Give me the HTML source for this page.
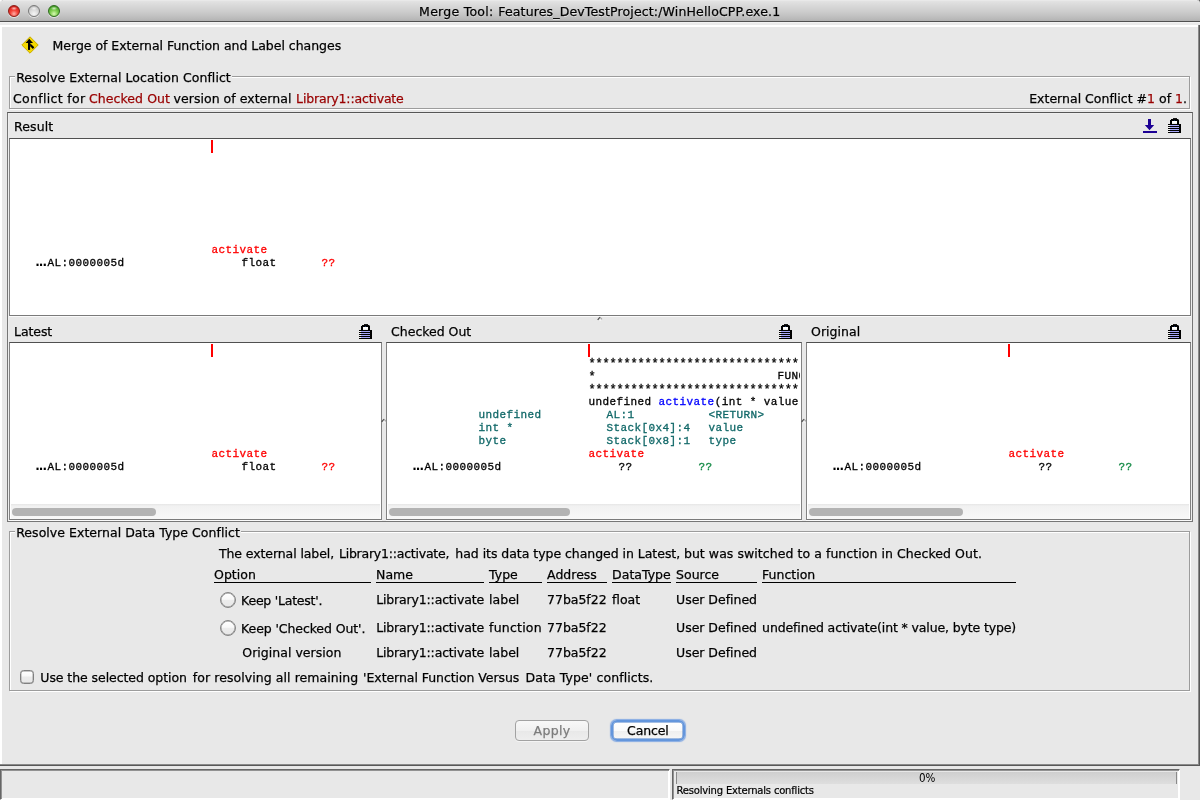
<!DOCTYPE html>
<html lang="en">
<head>
<meta charset="utf-8">
<title>Merge Tool</title>
<style>
html,body{margin:0;padding:0;}
body{width:1200px;height:800px;overflow:hidden;background:#e8e8e8;position:relative;font-family:"DejaVu Sans", "Liberation Sans", sans-serif;font-size:12.5px;color:#000;}
.abs{position:absolute;}
#titlebar,#main,#status{will-change:transform;}
#titlebar{position:absolute;left:0;top:0;width:1200px;height:21px;border-bottom:1px solid #505050;background:linear-gradient(#efefef 0,#e3e3e3 1px,#dadada 5px,#cccccc 12px,#bcbcbc 18px,#b2b2b2 21px);border-radius:3px 3px 0 0;z-index:2;}
.tl{position:absolute;top:5px;width:10px;height:10px;border-radius:50%;border:1px solid #777;box-shadow:0 1px 0 rgba(255,255,255,.55);}
#main{position:absolute;left:0;top:0;width:1200px;height:766px;background:linear-gradient(#000 0,#000 10px,#e8e8e8 10px);box-shadow:inset -1px -1px 0 #585858, inset -2px -2px 0 #8a8a8a, inset 2px 0 0 #fff;}
#topband{position:absolute;left:0;top:22px;width:1200px;height:3px;background:linear-gradient(#f2f2f2 0,#f2f2f2 1px,#ebebeb 1px,#ebebeb 3px);}
#topband2{position:absolute;left:0;top:25px;width:1198px;height:2px;background:#fff;}
.t,.s,.m,.dots,.tp{position:absolute;white-space:pre;}
.tp{font:12.5px/16px "DejaVu Sans", "Liberation Sans", sans-serif;height:16px;transform:scaleX(0.83);transform-origin:0 0;}
.t{font:12.5px/16px "DejaVu Sans", "Liberation Sans", sans-serif;height:16px;-webkit-text-stroke:0.25px;}
.s{font:10px/12px "DejaVu Sans", "Liberation Sans", sans-serif;height:12px;-webkit-text-stroke:0.2px;}
.r{color:#990000;}
.gbox{position:absolute;border:1px solid #9c9c9c;box-shadow:1px 1px 0 #fff, inset 1px 1px 0 #fff;box-sizing:border-box;}
.gtitle{position:absolute;background:#e8e8e8;}
.outer{position:absolute;border:1px solid #767676;border-top-color:#565656;box-shadow:inset 1px 1px 0 #eeeeee, inset -1px -1px 0 #eeeeee;}
.lbox{position:absolute;background:#fff;border:1px solid #828282;border-top-color:#505050;border-bottom-color:#7a7a7a;overflow:hidden;box-shadow:0 1px 0 #fafafa;}
.m{font:11px/13px "Liberation Mono", "DejaVu Sans Mono", monospace;letter-spacing:0.4px;height:13px;-webkit-text-stroke:0.3px;}
.dots{font:bold 12px/13px "DejaVu Sans", "Liberation Sans", sans-serif;height:13px;letter-spacing:-0.95px;}
.ast{margin-top:1px;font-size:12px;letter-spacing:-0.2px;}
.k{color:#000}.red{color:#ff0000}.blu{color:#0000ff}.teal{color:#106868}.grn{color:#118844}
.lclip{position:absolute;left:0;top:0;right:1px;bottom:0;overflow:hidden;}
.cursor{position:absolute;left:201px;top:1px;width:2px;height:13px;background:#ff0000;}
.sbtrack{position:absolute;left:1px;right:1px;bottom:0;height:15px;background:linear-gradient(#e6e6e6 0,#f1f1f1 2px,#f8f8f8 100%);}
.sbthumb{position:absolute;bottom:3px;height:8px;border-radius:4px;background:#b3b3b3;}
.ul{position:absolute;height:1px;background:#000;}
.radio{position:absolute;width:14px;height:14px;border-radius:50%;border:1px solid #858585;background:linear-gradient(#ffffff 0,#f8f8f8 45%,#ececec 52%,#e7e7e7 100%);box-shadow:inset 0 0 0 0.5px #8e8e8e;}
.cbox{position:absolute;width:12px;height:12px;border-radius:3.5px;border:1px solid #808080;background:linear-gradient(#ffffff 0,#f8f8f8 42%,#ebebeb 50%,#e8e8e8 100%);box-shadow:inset 0 0 0 0.4px #909090;}
.btn{position:absolute;box-sizing:content-box;margin:0;padding:0;font:inherit;color:inherit;text-align:left;overflow:visible;appearance:none;-webkit-appearance:none;border:1px solid #a2a2a2;border-radius:4px;background:linear-gradient(#f8f8f8,#f0f0f0 50%,#e8e8e8 52%,#eeeeee);box-shadow:0 1px 0 rgba(255,255,255,.5);}
.btn.dflt{border:2px solid #6496dc;border-radius:6px;box-shadow:inset 0 0 0 0.5px #4a7fca, 0 0 1px 0.5px rgba(100,150,225,.75);background:linear-gradient(#ffffff,#fafafa 50%,#efefef 52%,#f6f6f6);}
#status{position:absolute;left:0;top:766px;width:1200px;height:34px;background:#e8e8e8;}
.sunk{position:absolute;border-style:solid;border-width:1px;border-color:#666 #fff #fff #666;box-shadow:inset 1px 1px 0 #929292, inset -1px -1px 0 #fff;}
.prog{position:absolute;border-left:1px solid #8a8a8a;border-right:1px solid #8a8a8a;background:linear-gradient(#cfcfcf,#dedede);}
</style>
</head>
<body>
<div id="titlebar">
<div class="tl" style="left:8px;background:radial-gradient(ellipse 3.2px 1.8px at 50% 24%, rgba(255,255,255,.7), rgba(255,255,255,0)),radial-gradient(circle at 50% 78%, #ffb0a8 0, #f4463c 38%, #e22a22 66%, #a01410 100%);border-color:#8e1c16"></div>
<div class="tl" style="left:28px;background:radial-gradient(ellipse 3.2px 1.8px at 50% 24%, rgba(255,255,255,.7), rgba(255,255,255,0)),radial-gradient(circle at 50% 78%, #f6f6f6 0, #dcdcdc 42%, #c6c6c6 72%, #9c9c9c 100%);border-color:#7a7a7a"></div>
<div class="tl" style="left:48px;background:radial-gradient(ellipse 3.2px 1.8px at 50% 24%, rgba(255,255,255,.7), rgba(255,255,255,0)),radial-gradient(circle at 50% 78%, #d8fab4 0, #84d054 38%, #5ab434 66%, #2c7a1a 100%);border-color:#2e6c1e"></div>
<span class="t" style="left:419.1px;top:4px;letter-spacing:0.262px;text-shadow:0 1px 0 rgba(255,255,255,.6)">Merge Tool:</span>
<span class="t" style="left:498.3px;top:4px;letter-spacing:0.151px;text-shadow:0 1px 0 rgba(255,255,255,.6)">Features_DevTestProject:/WinHelloCPP.exe.1</span>
</div>
<div id="main">
<div id="topband"></div><div id="topband2"></div>
<svg class="abs" style="left:21px;top:36px" width="18" height="18" viewBox="0 0 18 18"><path d="M9 0.8 L17.2 9 L9 17.2 L0.8 9 Z" fill="#f4d800" stroke="#c8ac00" stroke-width="1"/><path d="M8.2 2.8 L4.6 6.9 L12 6.9 Z" fill="#000"/><rect x="7" y="6.5" width="2.1" height="7.4" fill="#000"/><path d="M9.1 7.3 L13.3 11.3 L11.9 13 L9.1 10.3 Z" fill="#000"/></svg>
<span class="t" style="left:52.6px;top:38px;letter-spacing:-0.026px;">Merge of External Function and Label changes</span>
<div class="gbox" style="left:9px;top:76px;width:1181px;height:33px"></div>
<div class="gtitle" style="left:15px;top:68px;width:217px;height:16px"></div>
<span class="t" style="left:16.2px;top:70px;letter-spacing:0.060px;">Resolve External Location Conflict</span>
<span class="t" style="left:12.9px;top:91px;letter-spacing:0.337px;">Conflict for</span>
<span class="t" style="left:88.9px;top:91px;letter-spacing:0.082px;color:#990000">Checked Out</span>
<span class="t" style="left:173.6px;top:91px;letter-spacing:0.032px;">version of external</span>
<span class="t" style="left:296.1px;top:91px;letter-spacing:-0.173px;color:#990000">Library1::activate</span>
<span class="t" style="left:1029.2px;top:91px;letter-spacing:0.008px;">External Conflict #<span class="r">1</span> of <span class="r">1</span>.</span>
<div class="outer" style="left:7px;top:112px;width:1184px;height:408px"></div>
<span class="t" style="left:14.1px;top:119px;letter-spacing:0.095px;">Result</span>
<span class="t" style="left:14.1px;top:324px;letter-spacing:-0.108px;">Latest</span>
<span class="t" style="left:391.1px;top:324px;letter-spacing:-0.018px;">Checked Out</span>
<span class="t" style="left:811.1px;top:324px;letter-spacing:0.025px;">Original</span>
<svg class="abs" style="left:1168px;top:118px" width="13" height="15" viewBox="0 0 13 15" shape-rendering="crispEdges"><rect x="5" y="0" width="4" height="1" fill="#1a1a1a"/><rect x="3" y="1" width="7" height="1" fill="#000"/><rect x="10" y="1" width="1" height="1" fill="#777"/><rect x="2" y="2" width="9" height="1" fill="#000"/><rect x="2" y="3" width="2" height="3" fill="#000"/><rect x="9" y="3" width="2" height="3" fill="#000"/><rect x="4" y="3" width="5" height="2" fill="#fff"/><rect x="4" y="5" width="5" height="1" fill="#ececec"/><rect x="6" y="2" width="1" height="1" fill="#0a2a66"/><rect x="0" y="6" width="13" height="9" fill="#000"/><rect x="2" y="7" width="9" height="1" fill="#a6a6fa"/><rect x="2" y="9" width="9" height="1" fill="#a6a6fa"/><rect x="2" y="11" width="9" height="1" fill="#a6a6fa"/><rect x="2" y="13" width="9" height="1" fill="#a6a6fa"/><rect x="0" y="7" width="2" height="1" fill="#f6f6f6"/><rect x="0" y="9" width="2" height="1" fill="#f6f6f6"/><rect x="0" y="11" width="2" height="1" fill="#f6f6f6"/><rect x="0" y="13" width="2" height="1" fill="#f6f6f6"/></svg>
<svg class="abs" style="left:359px;top:324px" width="13" height="15" viewBox="0 0 13 15" shape-rendering="crispEdges"><rect x="5" y="0" width="4" height="1" fill="#1a1a1a"/><rect x="3" y="1" width="7" height="1" fill="#000"/><rect x="10" y="1" width="1" height="1" fill="#777"/><rect x="2" y="2" width="9" height="1" fill="#000"/><rect x="2" y="3" width="2" height="3" fill="#000"/><rect x="9" y="3" width="2" height="3" fill="#000"/><rect x="4" y="3" width="5" height="2" fill="#fff"/><rect x="4" y="5" width="5" height="1" fill="#ececec"/><rect x="6" y="2" width="1" height="1" fill="#0a2a66"/><rect x="0" y="6" width="13" height="9" fill="#000"/><rect x="2" y="7" width="9" height="1" fill="#a6a6fa"/><rect x="2" y="9" width="9" height="1" fill="#a6a6fa"/><rect x="2" y="11" width="9" height="1" fill="#a6a6fa"/><rect x="2" y="13" width="9" height="1" fill="#a6a6fa"/><rect x="0" y="7" width="2" height="1" fill="#f6f6f6"/><rect x="0" y="9" width="2" height="1" fill="#f6f6f6"/><rect x="0" y="11" width="2" height="1" fill="#f6f6f6"/><rect x="0" y="13" width="2" height="1" fill="#f6f6f6"/></svg>
<svg class="abs" style="left:779px;top:324px" width="13" height="15" viewBox="0 0 13 15" shape-rendering="crispEdges"><rect x="5" y="0" width="4" height="1" fill="#1a1a1a"/><rect x="3" y="1" width="7" height="1" fill="#000"/><rect x="10" y="1" width="1" height="1" fill="#777"/><rect x="2" y="2" width="9" height="1" fill="#000"/><rect x="2" y="3" width="2" height="3" fill="#000"/><rect x="9" y="3" width="2" height="3" fill="#000"/><rect x="4" y="3" width="5" height="2" fill="#fff"/><rect x="4" y="5" width="5" height="1" fill="#ececec"/><rect x="6" y="2" width="1" height="1" fill="#0a2a66"/><rect x="0" y="6" width="13" height="9" fill="#000"/><rect x="2" y="7" width="9" height="1" fill="#a6a6fa"/><rect x="2" y="9" width="9" height="1" fill="#a6a6fa"/><rect x="2" y="11" width="9" height="1" fill="#a6a6fa"/><rect x="2" y="13" width="9" height="1" fill="#a6a6fa"/><rect x="0" y="7" width="2" height="1" fill="#f6f6f6"/><rect x="0" y="9" width="2" height="1" fill="#f6f6f6"/><rect x="0" y="11" width="2" height="1" fill="#f6f6f6"/><rect x="0" y="13" width="2" height="1" fill="#f6f6f6"/></svg>
<svg class="abs" style="left:1168px;top:324px" width="13" height="15" viewBox="0 0 13 15" shape-rendering="crispEdges"><rect x="5" y="0" width="4" height="1" fill="#1a1a1a"/><rect x="3" y="1" width="7" height="1" fill="#000"/><rect x="10" y="1" width="1" height="1" fill="#777"/><rect x="2" y="2" width="9" height="1" fill="#000"/><rect x="2" y="3" width="2" height="3" fill="#000"/><rect x="9" y="3" width="2" height="3" fill="#000"/><rect x="4" y="3" width="5" height="2" fill="#fff"/><rect x="4" y="5" width="5" height="1" fill="#ececec"/><rect x="6" y="2" width="1" height="1" fill="#0a2a66"/><rect x="0" y="6" width="13" height="9" fill="#000"/><rect x="2" y="7" width="9" height="1" fill="#a6a6fa"/><rect x="2" y="9" width="9" height="1" fill="#a6a6fa"/><rect x="2" y="11" width="9" height="1" fill="#a6a6fa"/><rect x="2" y="13" width="9" height="1" fill="#a6a6fa"/><rect x="0" y="7" width="2" height="1" fill="#f6f6f6"/><rect x="0" y="9" width="2" height="1" fill="#f6f6f6"/><rect x="0" y="11" width="2" height="1" fill="#f6f6f6"/><rect x="0" y="13" width="2" height="1" fill="#f6f6f6"/></svg>
<svg class="abs" style="left:1143px;top:119px" width="14" height="14" viewBox="0 0 14 14"><path d="M5 0 H8 V6 H11.2 L6.5 11.2 L1.8 6 H5 Z" fill="#1c0094"/><rect x="0" y="12" width="14" height="2" fill="#1c0094"/></svg>
<div class="lbox" style="left:9px;top:138px;width:1180px;height:176px">
<div class="lclip"><div class="cursor"></div>
<span class="m red" style="left:201.6px;top:105px">activate</span>
<span class="dots" style="left:25.2px;top:117px">...</span>
<span class="m k" style="left:37.6px;top:118px">AL:0000005d</span>
<span class="m k" style="left:231.6px;top:118px">float</span>
<span class="m red" style="left:311.6px;top:118px">??</span>
</div>
</div>
<div class="lbox" style="left:9px;top:342px;width:371px;height:176px">
<div class="lclip"><div class="cursor"></div>
<span class="m red" style="left:201.6px;top:105px">activate</span>
<span class="dots" style="left:25.2px;top:117px">...</span>
<span class="m k" style="left:37.6px;top:118px">AL:0000005d</span>
<span class="m k" style="left:231.6px;top:118px">float</span>
<span class="m red" style="left:311.6px;top:118px">??</span>
</div>
<div class="sbtrack"></div><div class="sbthumb" style="left:2px;width:144px"></div>
</div>
<div class="lbox" style="left:386px;top:342px;width:414px;height:176px">
<div class="lclip"><div class="cursor"></div>
<span class="m k ast" style="left:201.6px;top:14px">************************************************************</span>
<span class="m k ast" style="left:201.6px;top:27px">*</span>
<span class="m k" style="left:390.6px;top:27px">FUNCTION                         </span>
<span class="m k ast" style="left:614.6px;top:27px">*</span>
<span class="m k ast" style="left:201.6px;top:40px">************************************************************</span>
<span class="m k" style="left:201.6px;top:53px">undefined <span class="blu">activate</span>(int * value, byte type)</span>
<span class="m teal" style="left:91.6px;top:66px">undefined</span>
<span class="m teal" style="left:219.6px;top:66px">AL:1</span>
<span class="m teal" style="left:321.6px;top:66px">&lt;RETURN&gt;</span>
<span class="m teal" style="left:91.6px;top:79px">int *</span>
<span class="m teal" style="left:219.6px;top:79px">Stack[0x4]:4</span>
<span class="m teal" style="left:321.6px;top:79px">value</span>
<span class="m teal" style="left:91.6px;top:92px">byte</span>
<span class="m teal" style="left:219.6px;top:92px">Stack[0x8]:1</span>
<span class="m teal" style="left:321.6px;top:92px">type</span>
<span class="m red" style="left:201.6px;top:105px">activate</span>
<span class="dots" style="left:25.2px;top:117px">...</span>
<span class="m k" style="left:37.6px;top:118px">AL:0000005d</span>
<span class="m k" style="left:231.6px;top:118px">??</span>
<span class="m grn" style="left:311.6px;top:118px">??</span>
</div>
<div class="sbtrack"></div><div class="sbthumb" style="left:2px;width:181px"></div>
</div>
<div class="lbox" style="left:806px;top:342px;width:383px;height:176px">
<div class="lclip"><div class="cursor"></div>
<span class="m red" style="left:201.6px;top:105px">activate</span>
<span class="dots" style="left:25.2px;top:117px">...</span>
<span class="m k" style="left:37.6px;top:118px">AL:0000005d</span>
<span class="m k" style="left:231.6px;top:118px">??</span>
<span class="m grn" style="left:311.6px;top:118px">??</span>
</div>
<div class="sbtrack"></div><div class="sbthumb" style="left:2px;width:154px"></div>
</div>
<svg class="abs" style="left:596.7px;top:316.3px" width="6" height="5" viewBox="0 0 6 5"><path d="M0.7 3.8 L3 1.2" stroke="#4a4a4a" stroke-width="1.2" fill="none"/><path d="M3 1.2 L5 3.4" stroke="#a4a4a4" stroke-width="1.1" fill="none"/><path d="M2.4 4.2 L4.2 4.2" stroke="#fafafa" stroke-width="1" fill="none"/></svg>
<svg class="abs" style="left:381.3px;top:418px" width="6" height="5" viewBox="0 0 6 5"><path d="M0.7 3.8 L3 1.2" stroke="#4a4a4a" stroke-width="1.2" fill="none"/><path d="M3 1.2 L5 3.4" stroke="#a4a4a4" stroke-width="1.1" fill="none"/><path d="M2.4 4.2 L4.2 4.2" stroke="#fafafa" stroke-width="1" fill="none"/></svg>
<svg class="abs" style="left:801.3px;top:418px" width="6" height="5" viewBox="0 0 6 5"><path d="M0.7 3.8 L3 1.2" stroke="#4a4a4a" stroke-width="1.2" fill="none"/><path d="M3 1.2 L5 3.4" stroke="#a4a4a4" stroke-width="1.1" fill="none"/><path d="M2.4 4.2 L4.2 4.2" stroke="#fafafa" stroke-width="1" fill="none"/></svg>
<div class="gbox" style="left:9px;top:531px;width:1181px;height:160px"></div>
<div class="gtitle" style="left:15px;top:523px;width:226px;height:16px"></div>
<span class="t" style="left:16.2px;top:525px;letter-spacing:0.039px;">Resolve External Data Type Conflict</span>
<span class="t" style="left:218.9px;top:546px;letter-spacing:-0.086px;">The external label,</span>
<span class="t" style="left:338.9px;top:546px;letter-spacing:-0.224px;">Library1::activate,</span>
<span class="t" style="left:455.3px;top:546px;letter-spacing:-0.039px;">had its data type changed in Latest,</span>
<span class="t" style="left:683.9px;top:546px;letter-spacing:0.058px;">but was switched to a function in Checked Out.</span>
<span class="t" style="left:214.1px;top:567px;">Option</span>
<div class="ul" style="left:214px;top:582px;width:157px"></div>
<span class="t" style="left:376.1px;top:567px;">Name</span>
<div class="ul" style="left:376px;top:582px;width:108px"></div>
<span class="t" style="left:489.1px;top:567px;">Type</span>
<div class="ul" style="left:489px;top:582px;width:53px"></div>
<span class="t" style="left:547.1px;top:567px;">Address</span>
<div class="ul" style="left:547px;top:582px;width:60px"></div>
<span class="t" style="left:612.1px;top:567px;">DataType</span>
<div class="ul" style="left:612px;top:582px;width:59px"></div>
<span class="t" style="left:676.1px;top:567px;">Source</span>
<div class="ul" style="left:676px;top:582px;width:81px"></div>
<span class="t" style="left:762.1px;top:567px;">Function</span>
<div class="ul" style="left:762px;top:582px;width:254px"></div>
<div class="radio" role="radio" aria-checked="false" style="left:220px;top:592px"></div>
<div class="radio" role="radio" aria-checked="false" style="left:220px;top:620px"></div>
<span class="t" style="left:241.1px;top:593px;letter-spacing:-0.234px;">Keep 'Latest'.</span>
<span class="t" style="left:241.1px;top:621px;letter-spacing:-0.094px;">Keep 'Checked Out'.</span>
<span class="t" style="left:242.3px;top:645px;letter-spacing:0.029px;">Original version</span>
<span class="t" style="left:376.2px;top:592px;letter-spacing:-0.161px;">Library1::activate</span>
<span class="t" style="left:489.1px;top:592px;">label</span>
<span class="t" style="left:547.1px;top:592px;letter-spacing:-0.038px;">77ba5f22</span>
<span class="t" style="left:612.1px;top:592px;">float</span>
<span class="t" style="left:676px;top:592px;letter-spacing:-0.018px;">User Defined</span>
<span class="t" style="left:376.2px;top:620px;letter-spacing:-0.161px;">Library1::activate</span>
<span class="t" style="left:489.1px;top:620px;letter-spacing:0.205px;">function</span>
<span class="t" style="left:547.1px;top:620px;letter-spacing:-0.038px;">77ba5f22</span>
<span class="t" style="left:676px;top:620px;letter-spacing:-0.018px;">User Defined</span>
<span class="t" style="left:762.1px;top:620px;letter-spacing:-0.134px;">undefined activate(int * value, byte type)</span>
<span class="t" style="left:376.2px;top:645px;letter-spacing:-0.161px;">Library1::activate</span>
<span class="t" style="left:489.1px;top:645px;">label</span>
<span class="t" style="left:547.1px;top:645px;letter-spacing:-0.038px;">77ba5f22</span>
<span class="t" style="left:676px;top:645px;letter-spacing:-0.018px;">User Defined</span>
<div class="cbox" role="checkbox" aria-checked="false" style="left:20px;top:670px"></div>
<span class="t" style="left:40.3px;top:670px;letter-spacing:-0.063px;">Use the selected option</span>
<span class="t" style="left:192.8px;top:670px;letter-spacing:0.067px;">for resolving all remaining</span>
<span class="t" style="left:363.1px;top:670px;letter-spacing:-0.062px;">'External Function Versus</span>
<span class="t" style="left:525.5px;top:670px;letter-spacing:0.090px;">Data Type' conflicts.</span>
<button type="button" disabled class="btn" style="left:515px;top:720px;width:71.5px;height:18.5px"><span class="t" style="left:17.6px;top:2px;letter-spacing:0.326px;color:#7c7c7c">Apply</span></button>
<button type="button" class="btn dflt" style="left:611px;top:720px;width:70px;height:17px"><span class="t" style="left:14.1px;top:1px;letter-spacing:-0.152px;">Cancel</span></button>
</div>
<div id="status">
<div class="sunk" style="left:0;top:3px;width:668px;height:29px"></div>
<div class="sunk" style="left:672px;top:3px;width:506px;height:29px"></div>
<div class="prog" role="progressbar" aria-valuenow="0" aria-valuemin="0" aria-valuemax="100" style="left:676px;top:6px;width:499px;height:12px"></div>
<span class="tp" style="left:918.6px;top:4px;">0%</span>
<span class="s" style="left:676.5px;top:18.5px;letter-spacing:-0.191px;">Resolving Externals conflicts</span>
</div>
</body>
</html>
